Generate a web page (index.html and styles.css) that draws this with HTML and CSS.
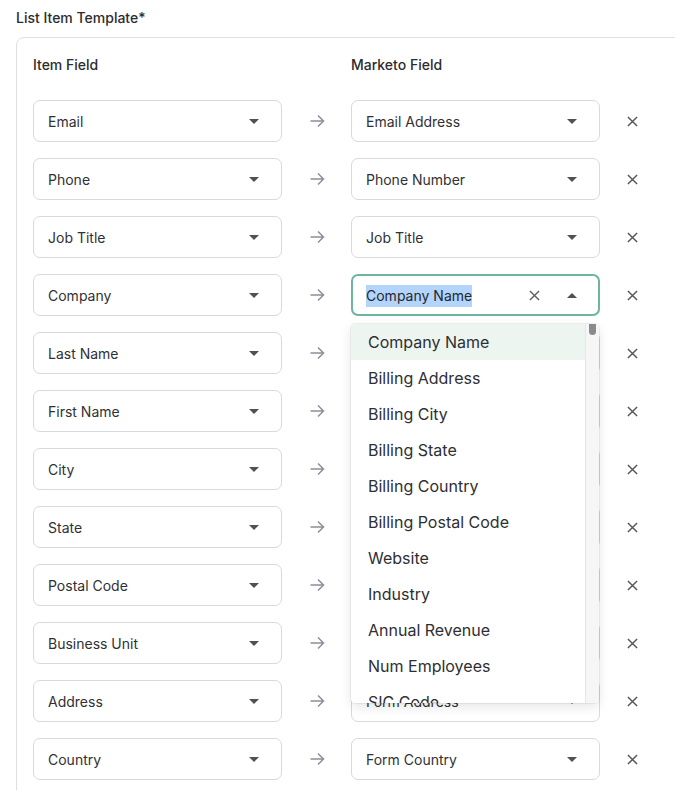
FILE: index.html
```html
<!DOCTYPE html>
<html>
<head>
<meta charset="utf-8">
<link rel="stylesheet" href="styles.css">
</head>
<body>
<div class="page">
  <div class="title">List Item Template*</div>
  <div class="card">
    <div class="grid">
      <div class="head">Item Field</div>
      <div></div>
      <div class="head">Marketo Field</div>
      <div></div>

      <div class="select"><span>Email</span><i class="caret"></i></div>
      <div class="arrow"><svg viewBox="0 0 16 16"><path d="M1.5 8h13M9 2.5 14.5 8 9 13.5"/></svg></div>
      <div class="select"><span>Email Address</span><i class="caret"></i></div>
      <div class="remove"><svg viewBox="0 0 12 12"><path d="M1 1l10 10M11 1 1 11"/></svg></div>

      <div class="select"><span>Phone</span><i class="caret"></i></div>
      <div class="arrow"><svg viewBox="0 0 16 16"><path d="M1.5 8h13M9 2.5 14.5 8 9 13.5"/></svg></div>
      <div class="select"><span>Phone Number</span><i class="caret"></i></div>
      <div class="remove"><svg viewBox="0 0 12 12"><path d="M1 1l10 10M11 1 1 11"/></svg></div>

      <div class="select"><span>Job Title</span><i class="caret"></i></div>
      <div class="arrow"><svg viewBox="0 0 16 16"><path d="M1.5 8h13M9 2.5 14.5 8 9 13.5"/></svg></div>
      <div class="select"><span>Job Title</span><i class="caret"></i></div>
      <div class="remove"><svg viewBox="0 0 12 12"><path d="M1 1l10 10M11 1 1 11"/></svg></div>

      <div class="select"><span>Company</span><i class="caret"></i></div>
      <div class="arrow"><svg viewBox="0 0 16 16"><path d="M1.5 8h13M9 2.5 14.5 8 9 13.5"/></svg></div>
      <div class="combo">
        <div class="select focused">
          <span class="sel-text">Company Name</span>
          <svg class="clear" viewBox="0 0 12 12"><path d="M1 1l10 10M11 1 1 11"/></svg>
          <i class="caret up"></i>
        </div>
        <div class="menu">
          <ul class="options">
            <li class="active">Company Name</li>
            <li>Billing Address</li>
            <li>Billing City</li>
            <li>Billing State</li>
            <li>Billing Country</li>
            <li>Billing Postal Code</li>
            <li>Website</li>
            <li>Industry</li>
            <li>Annual Revenue</li>
            <li>Num Employees</li>
            <li>SIC Code</li>
          </ul>
          <div class="track"><div class="thumb"></div></div>
        </div>
      </div>
      <div class="remove"><svg viewBox="0 0 12 12"><path d="M1 1l10 10M11 1 1 11"/></svg></div>

      <div class="select"><span>Last Name</span><i class="caret"></i></div>
      <div class="arrow"><svg viewBox="0 0 16 16"><path d="M1.5 8h13M9 2.5 14.5 8 9 13.5"/></svg></div>
      <div class="select"><span>Last Name</span><i class="caret"></i></div>
      <div class="remove"><svg viewBox="0 0 12 12"><path d="M1 1l10 10M11 1 1 11"/></svg></div>

      <div class="select"><span>First Name</span><i class="caret"></i></div>
      <div class="arrow"><svg viewBox="0 0 16 16"><path d="M1.5 8h13M9 2.5 14.5 8 9 13.5"/></svg></div>
      <div class="select"><span>First Name</span><i class="caret"></i></div>
      <div class="remove"><svg viewBox="0 0 12 12"><path d="M1 1l10 10M11 1 1 11"/></svg></div>

      <div class="select"><span>City</span><i class="caret"></i></div>
      <div class="arrow"><svg viewBox="0 0 16 16"><path d="M1.5 8h13M9 2.5 14.5 8 9 13.5"/></svg></div>
      <div class="select"><span>City</span><i class="caret"></i></div>
      <div class="remove"><svg viewBox="0 0 12 12"><path d="M1 1l10 10M11 1 1 11"/></svg></div>

      <div class="select"><span>State</span><i class="caret"></i></div>
      <div class="arrow"><svg viewBox="0 0 16 16"><path d="M1.5 8h13M9 2.5 14.5 8 9 13.5"/></svg></div>
      <div class="select"><span>State</span><i class="caret"></i></div>
      <div class="remove"><svg viewBox="0 0 12 12"><path d="M1 1l10 10M11 1 1 11"/></svg></div>

      <div class="select"><span>Postal Code</span><i class="caret"></i></div>
      <div class="arrow"><svg viewBox="0 0 16 16"><path d="M1.5 8h13M9 2.5 14.5 8 9 13.5"/></svg></div>
      <div class="select"><span>Postal Code</span><i class="caret"></i></div>
      <div class="remove"><svg viewBox="0 0 12 12"><path d="M1 1l10 10M11 1 1 11"/></svg></div>

      <div class="select"><span>Business Unit</span><i class="caret"></i></div>
      <div class="arrow"><svg viewBox="0 0 16 16"><path d="M1.5 8h13M9 2.5 14.5 8 9 13.5"/></svg></div>
      <div class="select"><span>Business Unit</span><i class="caret"></i></div>
      <div class="remove"><svg viewBox="0 0 12 12"><path d="M1 1l10 10M11 1 1 11"/></svg></div>

      <div class="select"><span>Address</span><i class="caret"></i></div>
      <div class="arrow"><svg viewBox="0 0 16 16"><path d="M1.5 8h13M9 2.5 14.5 8 9 13.5"/></svg></div>
      <div class="select"><span>Form Address</span><i class="caret"></i></div>
      <div class="remove"><svg viewBox="0 0 12 12"><path d="M1 1l10 10M11 1 1 11"/></svg></div>

      <div class="select"><span>Country</span><i class="caret"></i></div>
      <div class="arrow"><svg viewBox="0 0 16 16"><path d="M1.5 8h13M9 2.5 14.5 8 9 13.5"/></svg></div>
      <div class="select"><span>Form Country</span><i class="caret"></i></div>
      <div class="remove"><svg viewBox="0 0 12 12"><path d="M1 1l10 10M11 1 1 11"/></svg></div>
    </div>
  </div>
</div>
</body>
</html>
```

FILE: styles.css
```css
html, body {
  margin: 0;
  padding: 0;
  background: #fff;
  overflow: hidden;
}
body {
  font-family: Inter, "Noto Sans", "Liberation Sans", sans-serif;
  color: #303134;
  font-size: 14px;
  line-height: 20px;
}
.page {
  padding: 8px 0 0 16px;
}
.title {
  font-weight: 500;
  color: #2b2c2f;
  margin-bottom: 9px;
}
.card {
  width: 720px;
  height: 900px;
  border: 1px solid #dedfe3;
  border-radius: 8px;
  padding: 17px 0 0 16px;
  box-sizing: border-box;
}
.grid {
  display: grid;
  grid-template-columns: 249px 69px 249px 64px;
  grid-template-rows: 29px;
  grid-auto-rows: 42px;
  row-gap: 16px;
}
.grid > .head {
  font-weight: 500;
  color: #2b2c2f;
}
.select {
  box-sizing: border-box;
  height: 42px;
  border: 1px solid #d8d9de;
  border-radius: 7px;
  background: #fff;
  display: flex;
  align-items: center;
  padding: 1px 22px 0 14px;
  position: relative;
}
.select span {
  flex: 1;
  white-space: nowrap;
  overflow: hidden;
}
.caret {
  width: 0;
  height: 0;
  border-left: 5px solid transparent;
  border-right: 5px solid transparent;
  border-top: 5px solid #4f5157;
}
.caret.up {
  border-top: 0;
  border-bottom: 5px solid #4f5157;
}
.select.focused {
  border: 2px solid #6db59c;
  padding: 1px 21px 0 13px;
}
.sel-text {
  flex: 0 0 auto !important;
  background: #b3d4fc;
  line-height: 22px;
  color: #26272a;
}
.clear {
  width: 11px;
  height: 11px;
  margin-left: auto;
  margin-right: 27px;
  fill: none;
  stroke: #5c5e63;
  stroke-width: 1.5;
}
.arrow, .remove {
  display: flex;
  align-items: center;
  justify-content: center;
}
.arrow svg {
  width: 16px;
  height: 16px;
  fill: none;
  stroke: #8b8f99;
  stroke-width: 1.5;
}
.remove svg {
  width: 11px;
  height: 11px;
  fill: none;
  stroke: #55575c;
  stroke-width: 1.6;
}
.combo {
  position: relative;
  z-index: 5;
}
.menu {
  position: absolute;
  top: 50px;
  left: 0;
  width: 248px;
  height: 379px;
  background: #fff;
  border-radius: 4px;
  box-shadow: 0 0 0 1px rgba(0,0,0,0.05), 0 4px 12px rgba(0,0,0,0.10);
  overflow: hidden;
  display: flex;
}
.options {
  list-style: none;
  margin: 0;
  padding: 0;
  flex: 1;
}
.options li {
  height: 36px;
  line-height: 36px;
  padding-left: 17px;
  font-size: 16px;
  color: #2e2f33;
  white-space: nowrap;
}
.options li.active {
  background: #edf5f1;
}
.track {
  width: 13px;
  background: #f6f6f6;
  border-left: 1px solid #e6e6e6;
  position: relative;
}
.thumb {
  position: absolute;
  top: -6px;
  left: 3px;
  width: 7px;
  height: 17px;
  border-radius: 4px;
  background: #8a8a8c;
}
```
